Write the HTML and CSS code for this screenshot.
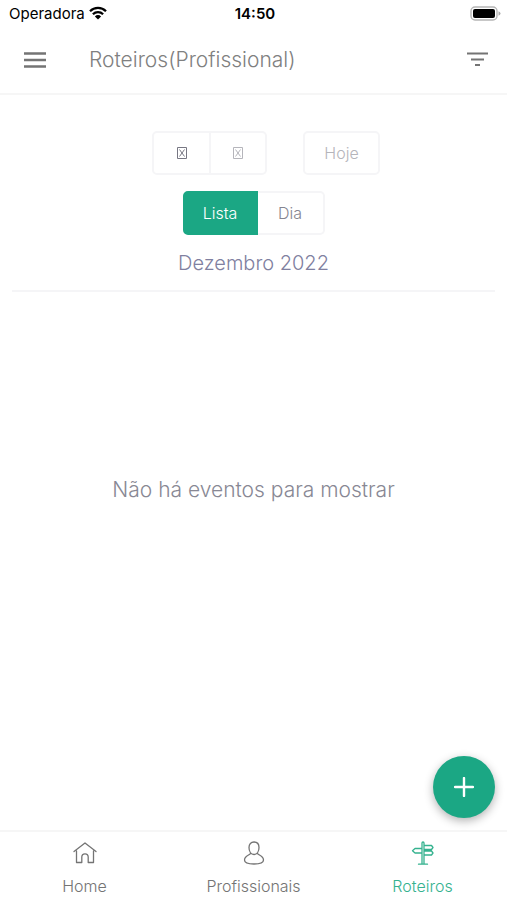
FILE: index.html
```html
<!DOCTYPE html>
<html lang="pt-BR">
<head>
<meta charset="utf-8">
<meta name="viewport" content="width=device-width, initial-scale=1">
<title>Roteiros</title>
<link rel="stylesheet" href="styles.css">
</head>
<body>
<div class="app">
  <div class="status">
    <div class="carrier">
      <span>Operadora</span>
      <svg class="wifi" viewBox="0 0 18 14" width="18" height="14" aria-hidden="true">
        <path d="M1 5.2a11.4 11.4 0 0 1 16 0M3.9 8.2a7.3 7.3 0 0 1 10.2 0" fill="none" stroke="#000" stroke-width="2.3"/>
        <path d="M9 13.6 5.900 10.400a4.400 4.400 0 0 1 6.200 0z"/>
      </svg>
    </div>
    <span class="clock">14:50</span>
    <svg class="battery" viewBox="0 0 31 15" width="31" height="15" aria-hidden="true">
      <rect x="1" y="1" width="26" height="13" rx="4" fill="#fff" stroke="#b5b5b5" stroke-width="1.4"/>
      <rect x="3" y="3" width="22" height="9" rx="2"/>
      <path d="M28.500 5.200v4.600q2-.8 2-2.300t-2-2.300z" fill="#aaa"/>
    </svg>
  </div>
  <header class="topbar">
    <button class="icon-btn" aria-label="Menu">
      <svg viewBox="0 0 24 18" width="24" height="18"><path d="M1 2.500h22M1 9h22M1 15.500h22" stroke="#747474" stroke-width="2.300"/></svg>
    </button>
    <h1>Roteiros(Profissional)</h1>
    <button class="icon-btn" aria-label="Filtrar">
      <svg viewBox="0 0 24 18" width="24" height="18"><path d="M1 2.500h21M5 8.500h13M9 14h5" stroke="#747474" stroke-width="2.200"/></svg>
    </button>
  </header>
  <main>
    <div class="toolbar">
      <div class="group">
        <button class="btn nav" aria-label="Anterior">
          <svg viewBox="0 0 10 14" width="10" height="14"><path d="M.5 1.500h9v11h-9zM2.500 3.500l5 7M7.500 3.500l-5 7" fill="none" stroke="#777783"/></svg>
        </button>
        <button class="btn nav next" aria-label="Próximo">
          <svg viewBox="0 0 10 14" width="10" height="14"><path d="M.5 1.500h9v11h-9zM2.500 3.500l5 7M7.500 3.500l-5 7" fill="none" stroke="#b5b5bb"/></svg>
        </button>
      </div>
      <button class="btn today">Hoje</button>
    </div>
    <div class="group views">
      <button class="btn active">Lista</button>
      <button class="btn day">Dia</button>
    </div>
    <h2>Dezembro 2022</h2>
    <section class="events"><p>Não há eventos para mostrar</p></section>
    <button class="fab" aria-label="Adicionar">
      <svg viewBox="0 0 20 20" width="20" height="20"><path d="M10 1v18M1 10h18" stroke="#fff" stroke-width="2.400" stroke-linecap="round"/></svg>
    </button>
  </main>
  <nav class="tabs">
    <a href="#home">
      <svg viewBox="0 0 26 26" width="26" height="26"><path d="M2 11.500 13 3l11 8.500M4.500 11v11.500h5.300V17q0-3.200 3.200-3.200t3.200 3.200v5.500h5.300V11"/></svg>
      <span>Home</span>
    </a>
    <a href="#profissionais">
      <svg viewBox="0 0 26 26" width="26" height="26"><path d="M8 7.500C8 4 10 2 13 2s5 2 5 5.500c0 4-2 7-5 7s-5-3-5-7zM9.500 13.200C9.500 15 3.500 15.500 3.500 20c0 2.500 4 4 9.500 4s9.500-1.500 9.500-4c0-4.500-6-5-6-6.800"/></svg>
      <span>Profissionais</span>
    </a>
    <a href="#roteiros" class="current">
      <svg viewBox="0 0 26 26" width="26" height="26"><path d="M12 24V3q0-1 1-1t1 1v21M8.500 24.200h9M12 8.500H5l-2.500 2.300L5 13h7zM14 5.500h7.500L23 7.500l-1.500 2H14zM14 11h7.500l1.500 2-1.500 2H14z"/></svg>
      <span>Roteiros</span>
    </a>
  </nav>
</div>
</body>
</html>
```
FILE: styles.css
```css
* { box-sizing: border-box; }

body {
  margin: 0;
  background: #fff;
  color: #808080;
  font-family: Inter, "Liberation Sans", sans-serif;
  font-weight: 300;
}

button {
  margin: 0;
  font: inherit;
  cursor: pointer;
}

svg { display: block; }

.app {
  display: flex;
  flex-direction: column;
  min-height: 100vh;
}

.status {
  display: grid;
  grid-template-columns: 1fr auto 1fr;
  align-items: center;
  height: 26px;
  padding: 0 6px 0 9px;
  color: #000;
  font-size: 15px;
  font-weight: 400;
}

.carrier {
  display: flex;
  align-items: center;
  gap: 4px;
}

.clock { font-weight: 600; }

.battery { justify-self: end; }

.topbar {
  display: flex;
  align-items: center;
  height: 69px;
  padding: 0 17px 0 23px;
  border-bottom: 2px solid #f6f6f6;
}

.icon-btn {
  padding: 0;
  border: 0;
  background: none;
}

h1 {
  flex: 1;
  margin: 0 0 0 42px;
  font-size: 21px;
  font-weight: 300;
}

main {
  position: relative;
  display: flex;
  flex: 1;
  flex-direction: column;
  align-items: center;
  padding: 36px 12px 0;
}

.toolbar {
  display: flex;
  gap: 36px;
  padding-left: 25px;
}

.group { display: flex; }

.btn {
  display: flex;
  align-items: center;
  justify-content: center;
  height: 44px;
  padding: 0 16px;
  border: 2px solid #f5f5f7;
  border-radius: 5px;
  background: #fff;
  color: #858590;
  font-size: 16px;
}

.group .btn:first-child { border-radius: 5px 0 0 5px; }

.group .btn:last-child {
  border-left-width: 0;
  border-radius: 0 5px 5px 0;
}

.nav { width: 59px; }

.nav.next { width: 56px; }

.today {
  width: 77px;
  color: #b5b5bb;
}

.views { margin-top: 16px; }

.btn.active {
  width: 75px;
  border-color: #1ba784;
  background: #1ba784;
  color: #fff;
}

.day { width: 67px; }

h2 {
  align-self: stretch;
  margin: 13px 0 0;
  padding-bottom: 12px;
  border-bottom: 2px solid #f5f5f7;
  color: #8080a0;
  font-size: 20px;
  font-weight: 300;
  line-height: 30px;
  text-align: center;
}

.events {
  display: flex;
  flex: 1;
  align-items: center;
  padding-bottom: 144px;
  color: #888894;
  font-size: 21px;
}

.events p { margin: 0; }

.fab {
  position: absolute;
  right: 12px;
  bottom: 12px;
  display: flex;
  align-items: center;
  justify-content: center;
  width: 62px;
  height: 62px;
  padding: 0;
  border: 0;
  border-radius: 50%;
  background: #1ba784;
  box-shadow: 0 3px 10px rgba(0, 0, 0, 0.3);
}

.tabs {
  display: grid;
  grid-template-columns: repeat(3, 1fr);
  height: 70px;
  border-top: 2px solid #f6f6f6;
}

.tabs a {
  display: flex;
  flex-direction: column;
  align-items: center;
  gap: 10px;
  padding-top: 8px;
  color: #747474;
  font-size: 16px;
  line-height: 20px;
  text-decoration: none;
}

.tabs svg {
  fill: none;
  stroke: currentColor;
  stroke-width: 1.3;
  stroke-linejoin: round;
  stroke-linecap: round;
}

.tabs .current { color: #35b28f; }
```
